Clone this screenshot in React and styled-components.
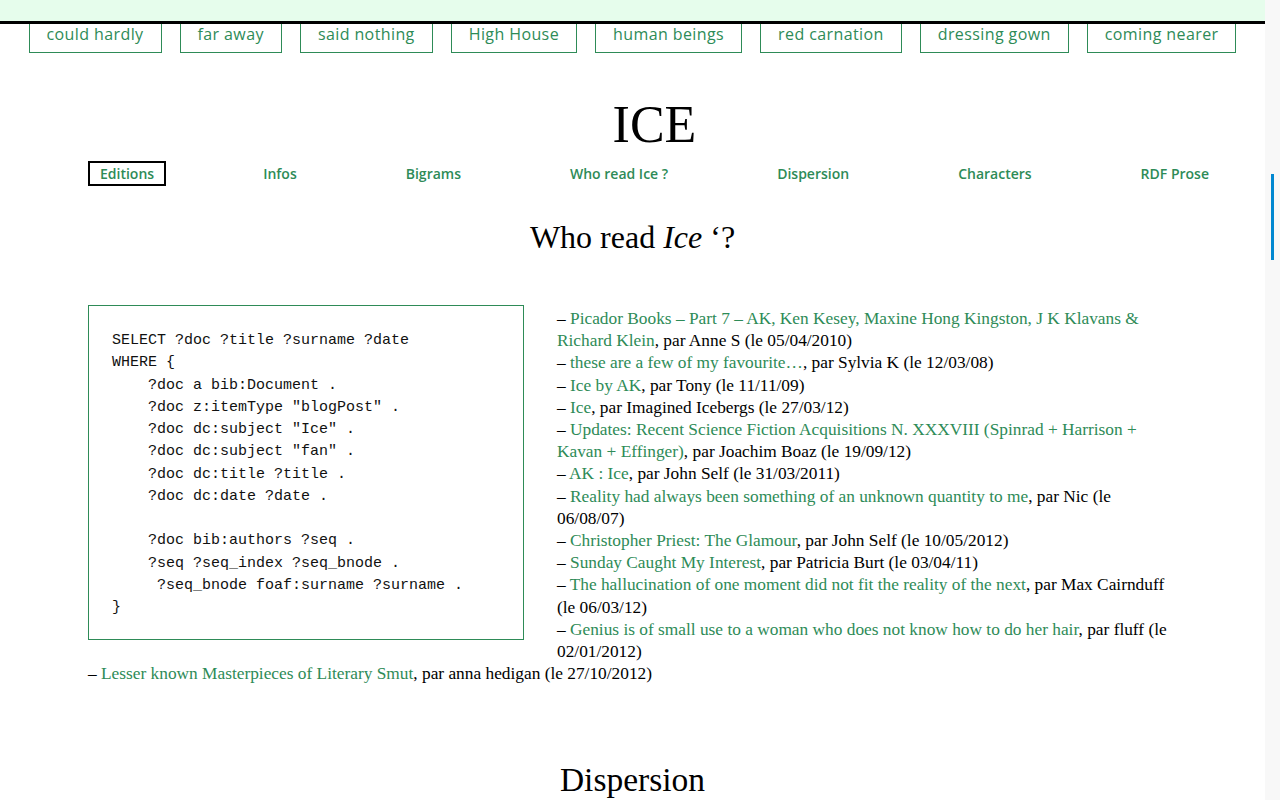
import React from 'react';
import styled, { createGlobalStyle } from 'styled-components';

const GlobalStyle = createGlobalStyle`
  html, body, #root {
    height: 100%;
    margin: 0;
    overflow: hidden;
  }
  body {
    background: #ffffff;
    font-family: "Liberation Serif", "Times New Roman", serif;
    color: #000;
  }
`;

const green = '#2e8b57';

const Shell = styled.div`
  display: flex;
  height: 100%;
`;

const Page = styled.div`
  width: 1265px;
  flex: none;
  overflow: hidden;
`;

const Rail = styled.div`
  flex: 1;
  background: #f8f8f8;
  padding: 174px 0 0 6px;
`;

const Thumb = styled.div`
  width: 3px;
  height: 86px;
  background: #0288d1;
`;

const TopBand = styled.div`
  height: 21px;
  background: #e6fdec;
  border-bottom: 3px solid #000;
`;

const TagRow = styled.div`
  display: flex;
  justify-content: center;
  gap: 18px;
`;

const Tag = styled.a`
  display: block;
  height: 29px;
  box-sizing: border-box;
  padding: 0 17px;
  border: 1px solid ${green};
  border-top: none;
  font-family: "Open Sans", sans-serif;
  font-size: 16px;
  letter-spacing: 0.4px;
  line-height: 20px;
  color: ${green};
  text-decoration: none;
`;

const Masthead = styled.div`
  padding-left: 44px;
`;

const Title = styled.h1`
  margin: 42px 0 0;
  text-align: center;
  font-size: 52px;
  line-height: 60px;
  font-weight: normal;
`;

const Nav = styled.ul`
  display: flex;
  justify-content: space-between;
  list-style: none;
  margin: 6px 0 0;
  padding: 0 44px;
`;

const NavItem = styled.li`
  box-sizing: border-box;
  height: 25px;
  padding: 0 10px;
  border: 2px solid ${(p) => (p.$active ? '#000' : 'transparent')};
  font-family: "Open Sans", sans-serif;
  font-weight: 600;
  font-size: 14px;
  line-height: 21px;
  color: ${green};
`;

const Heading = styled.h2`
  margin: ${(p) => p.$top}px 0 0;
  text-align: center;
  font-size: ${(p) => p.$size || 32}px;
  line-height: 40px;
  font-weight: normal;
`;

const Section = styled.div`
  padding: 0 88px;
  margin-top: 48px;
  &::after {
    content: '';
    display: block;
    clear: both;
  }
`;

const Query = styled.pre`
  float: left;
  width: 436px;
  box-sizing: border-box;
  margin: 0 33px 15px 0;
  padding: 24px 23px 20px;
  border: 1px solid ${green};
  font-family: "Liberation Mono", "Courier New", monospace;
  font-size: 15px;
  line-height: 22.25px;
  color: #111;
`;

const Readers = styled.div`
  padding-top: 3px;
  font-size: 17.33px;
  line-height: 22.2px;
`;

const Reader = styled.div``;

const Link = styled.a`
  color: ${green};
  text-decoration: none;
`;

const tags = [
  'could hardly',
  'far away',
  'said nothing',
  'High House',
  'human beings',
  'red carnation',
  'dressing gown',
  'coming nearer',
];

const menu = ['Editions', 'Infos', 'Bigrams', 'Who read Ice ?', 'Dispersion', 'Characters', 'RDF Prose'];

const query = `SELECT ?doc ?title ?surname ?date
WHERE {
    ?doc a bib:Document .
    ?doc z:itemType "blogPost" .
    ?doc dc:subject "Ice" .
    ?doc dc:subject "fan" .
    ?doc dc:title ?title .
    ?doc dc:date ?date .

    ?doc bib:authors ?seq .
    ?seq ?seq_index ?seq_bnode .
     ?seq_bnode foaf:surname ?surname .
}`;

const readers = [
  ['Picador Books – Part 7 – AK, Ken Kesey, Maxine Hong Kingston, J K Klavans & Richard Klein', 'Anne S', '05/04/2010'],
  ['these are a few of my favourite…', 'Sylvia K', '12/03/08'],
  ['Ice by AK', 'Tony', '11/11/09'],
  ['Ice', 'Imagined Icebergs', '27/03/12'],
  ['Updates: Recent Science Fiction Acquisitions N. XXXVIII (Spinrad + Harrison + Kavan + Effinger)', 'Joachim Boaz', '19/09/12'],
  ['AK : Ice', 'John Self', '31/03/2011'],
  ['Reality had always been something of an unknown quantity to me', 'Nic', '06/08/07'],
  ['Christopher Priest: The Glamour', 'John Self', '10/05/2012'],
  ['Sunday Caught My Interest', 'Patricia Burt', '03/04/11'],
  ['The hallucination of one moment did not fit the reality of the next', 'Max Cairnduff', '06/03/12'],
  ['Genius is of small use to a woman who does not know how to do her hair', 'fluff', '02/01/2012'],
  ['Lesser known Masterpieces of Literary Smut', 'anna hedigan', '27/10/2012'],
];

export default function App() {
  return (
    <Shell>
      <GlobalStyle />
      <Page>
        <TopBand />
        <TagRow>
          {tags.map((t) => (
            <Tag key={t}>{t}</Tag>
          ))}
        </TagRow>
        <Masthead>
          <Title>ICE</Title>
          <Nav>
            {menu.map((m, i) => (
              <NavItem key={m} $active={i === 0}>{m}</NavItem>
            ))}
          </Nav>
        </Masthead>
        <Heading $top={31}>
          Who read <em>Ice</em> ‘?
        </Heading>
        <Section>
          <Query>{query}</Query>
          <Readers>
            {readers.map(([title, who, date]) => (
              <Reader key={title}>
                – <Link>{title}</Link>, par {who} (le {date})
              </Reader>
            ))}
          </Readers>
        </Section>
        <Heading $top={75} $size={33.5}>Dispersion</Heading>
      </Page>
      <Rail>
        <Thumb />
      </Rail>
    </Shell>
  );
}
